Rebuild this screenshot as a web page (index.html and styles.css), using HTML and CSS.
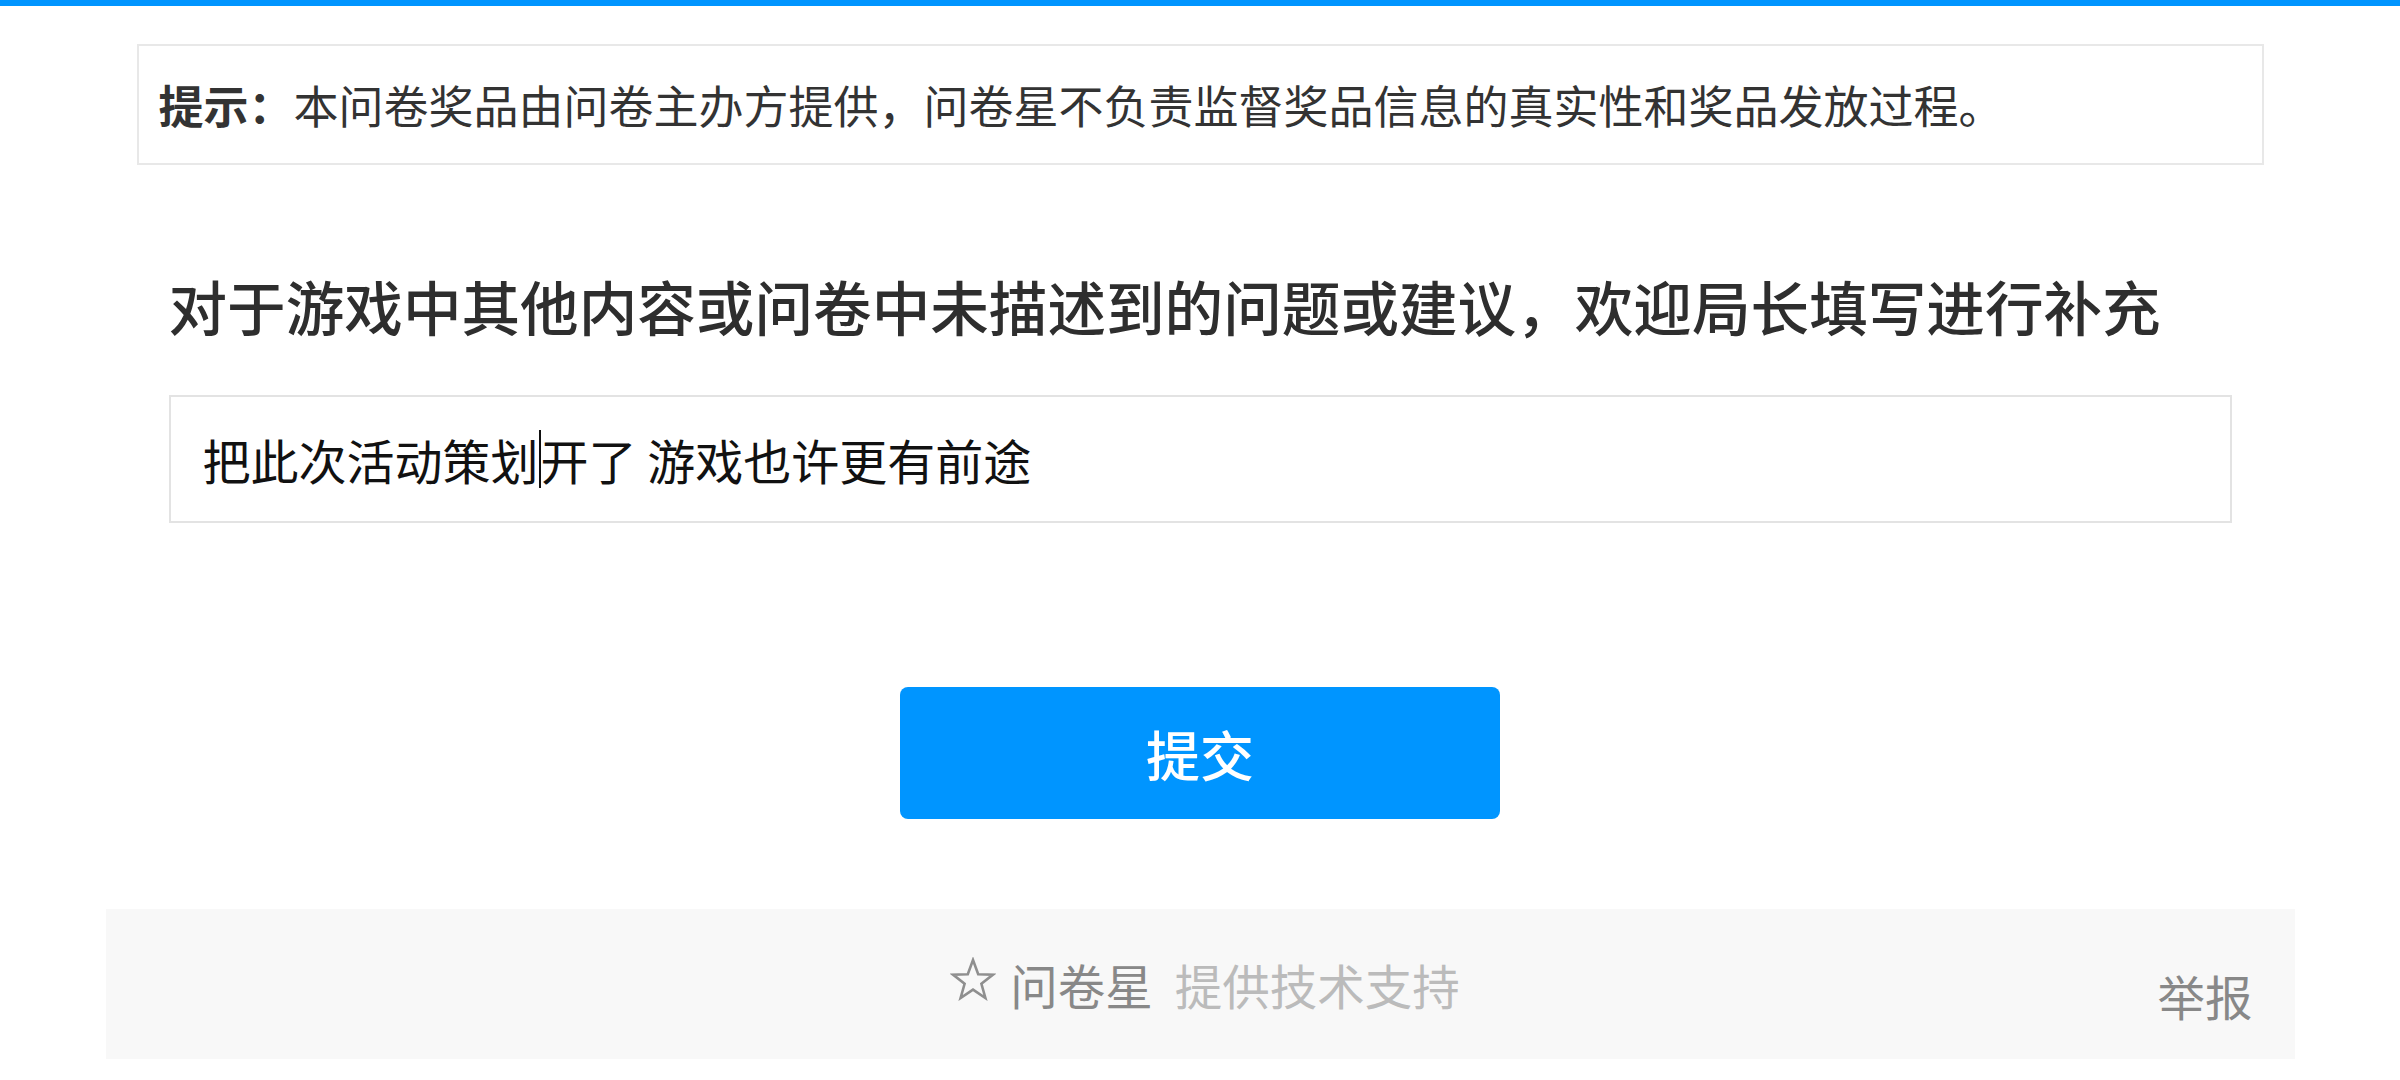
FILE: index.html
```html
<!DOCTYPE html>
<html lang="zh-CN">
<head>
<meta charset="utf-8">
<title>问卷</title>
<link rel="stylesheet" href="styles.css">
</head>
<body>
<div class="topbar"></div>
<div class="page">
  <div class="notice"><b class="notice-label">提示：</b>本问卷奖品由问卷主办方提供，问卷星不负责监督奖品信息的真实性和奖品发放过程。</div>
  <div class="question">
    <div class="q-title">对于游戏中其他内容或问卷中未描述到的问题或建议，欢迎局长填写进行补充</div>
    <div class="answer">把此次活动策划<span class="caret"></span>开了 游戏也许更有前途</div>
  </div>
  <div class="submit-row"><button class="submit" type="button">提交</button></div>
  <footer class="footer">
    <div class="spacer"></div>
    <div class="brand">
      <svg class="star" width="46" height="44" viewBox="0 0 46 44" aria-hidden="true">
        <polygon points="23,3 28.2,17.2 43,17.6 31.4,26.8 35.4,41 23,32.6 10.6,41 14.6,26.8 3,17.6 17.8,17.2" fill="none" stroke="#8f8f8f" stroke-width="2.6" stroke-linejoin="miter"/>
      </svg>
      <span class="brand-name">问卷星</span><span class="brand-tail">提供技术支持</span>
    </div>
    <a class="report">举报</a>
  </footer>
</div>
</body>
</html>
```
FILE: styles.css
```css
html, body {
  margin: 0;
  padding: 0;
  background: #ffffff;
}
body {
  font-family: "Noto Sans CJK SC", "Noto Sans", sans-serif;
  color: #333333;
}
.topbar {
  height: 6px;
  background: #0095ff;
}
.page {
  width: 2189px;
  margin: 0 auto;
  display: flex;
  flex-direction: column;
}
.notice {
  margin: 38px 31px 0;
  height: 117px;
  border: 2px solid #e8e8e8;
  padding: 0 20px;
  display: flex;
  align-items: center;
  font-size: 45px;
  color: #333333;
  white-space: nowrap;
}
.notice-label {
  font-weight: 700;
}
.question {
  margin: 101px 63px 0;
  display: flex;
  flex-direction: column;
  gap: 49px;
}
.q-title {
  font-size: 58.6px;
  line-height: 80px;
  font-weight: 500;
  color: #2e2e2e;
  white-space: nowrap;
}
.answer {
  height: 124px;
  border: 2px solid #e3e3e3;
  padding: 0 32px;
  display: flex;
  align-items: center;
  font-size: 48px;
  color: #111111;
  white-space: pre;
}
.caret {
  display: inline-block;
  width: 2px;
  height: 58px;
  background: #111111;
}
.submit-row {
  margin-top: 164px;
  display: flex;
  justify-content: center;
}
.submit {
  width: 600px;
  height: 132px;
  border: none;
  border-radius: 8px;
  background: #0095ff;
  color: #ffffff;
  font-family: inherit;
  font-size: 54px;
  font-weight: 500;
  padding: 0;
}
.footer {
  margin-top: 90px;
  height: 150px;
  background: #f8f8f8;
  display: grid;
  grid-template-columns: 1fr auto 1fr;
  align-items: center;
  font-size: 47.5px;
}
.brand {
  display: flex;
  align-items: center;
  padding-left: 10px;
}
.star {
  display: block;
  margin-right: 14px;
  margin-top: -10px;
}
.brand-name {
  color: #888888;
  margin-right: 22px;
}
.brand-tail {
  color: #bbbbbb;
}
.report {
  justify-self: end;
  margin-right: 42px;
  margin-top: 22px;
  color: #888888;
}
```
